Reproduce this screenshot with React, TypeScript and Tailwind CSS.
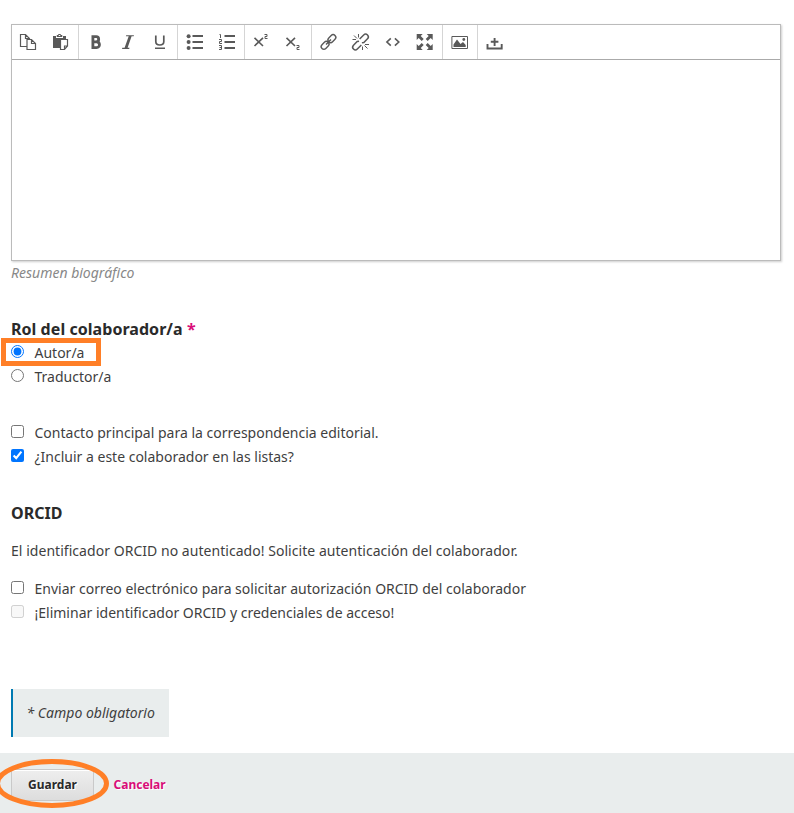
import type { ReactNode } from "react";

function Icon({ children }: { children: ReactNode }) {
  return (
    <svg width="18" height="18" viewBox="0 0 18 18" fill="none" stroke="#595959" strokeWidth="1" className="shrink-0 overflow-visible">
      {children}
    </svg>
  );
}

const solid = { fill: "#595959", stroke: "none" };

const icons: Record<string, ReactNode> = {
  Copiar: (
    <Icon>
      <path strokeWidth="1.200" d="M6.500 13.500H0.500V1.500H5.500L9.500 5.500V6M5.500 1.500V5.500H9.500M7 6.500H11.500L15.500 10.500V16.500H7ZM11.500 6.500V10.500H15.500" />
    </Icon>
  ),
  Pegar: (
    <Icon>
      <path {...solid} d="M1 3H4V5H11V3H14V6H8V15H1Z" />
      <path d="M5 3.500V2.500H6.500V1.500H8.500V2.500H10V3.500H5" />
      <path strokeWidth="1.200" d="M8.500 6.500H15.500V13L12.500 16.500H8.500ZM15.500 13H12.500V16.500" />
    </Icon>
  ),
  Negrita: (
    <Icon>
      <path strokeWidth="2.800" d="M5.900 3.700H9.200C12.500 3.700 12.500 8.800 9.200 8.800H5.900ZM5.900 8.800H9.600C13.400 8.800 13.400 14.600 9.600 14.600H5.900Z" />
    </Icon>
  ),
  Cursiva: (
    <Icon>
      <path {...solid} d="M7.200 2.200H15L14.700 3.300H12.600L8.600 14.800H10.500L10.200 16H3L3.300 14.800H5.600L9.700 3.300H6.900Z" />
    </Icon>
  ),
  Subrayado: (
    <Icon>
      <path strokeWidth="1.700" d="M4.800 2.500V8.500Q4.800 12 8.800 12Q12.800 12 12.800 8.500V2.500" />
      <path {...solid} d="M4 14.500H14V16H4Z" />
    </Icon>
  ),
  Lista: (
    <Icon>
      <g {...solid}>
        <circle cx="2.600" cy="3.200" r="2" />
        <circle cx="2.600" cy="9" r="2" />
        <circle cx="2.600" cy="15" r="2" />
        <path d="M6.500 2H17V4H6.500ZM6.500 8H17V10H6.500ZM6.500 14H17V16H6.500Z" />
      </g>
    </Icon>
  ),
  "Lista numerada": (
    <Icon>
      <path {...solid} d="M6.500 2H17V4H6.500ZM6.500 8H17V10H6.500ZM6.500 14H17V16H6.500Z" />
      <path d="M1.500 1.500H2.500V5M1 6.500H3.500V8.500H1.500V10.500H4M1 12.500H3.500V16.500H1M1.500 14.500H3.500" />
    </Icon>
  ),
  Superíndice: (
    <Icon>
      <path strokeWidth="1.600" d="M1.500 4.800L10 13M10 4.800L1.500 13" />
      <path d="M11.500 1.500H14V3.500H12V5.500H14.500" />
    </Icon>
  ),
  Subíndice: (
    <Icon>
      <path strokeWidth="1.600" d="M1.500 4.800L10 13M10 4.800L1.500 13" />
      <path d="M11.500 12.500H14V14.500H12V16.500H14.500" />
    </Icon>
  ),
  Enlace: (
    <Icon>
      <g transform="translate(-0.500 0) rotate(-45 9 9)" strokeWidth="1.400">
        <rect x="-0.200" y="6.300" width="8.800" height="5.400" rx="2.700" />
        <rect x="9.400" y="6.300" width="8.800" height="5.400" rx="2.700" />
        <path strokeWidth="1.500" d="M5.500 9H12.500" />
      </g>
    </Icon>
  ),
  "Quitar enlace": (
    <Icon>
      <g transform="translate(-0.500 0) rotate(-45 9 9)" strokeWidth="1.500">
        <path d="M7.500 11.700H1.800A2.700 2.700 0 0 1 1.800 6.300H7L8.500 7.500M10.500 6.300H16.200A2.700 2.700 0 0 1 16.200 11.700H11L9.500 10.500" />
      </g>
      <path strokeWidth="1" d="M0.500 6.500H4M2 2.500L5 5.500M6.500 1V4.500M13 11.500H17M12.500 12.500L15.500 15.500M10.500 13.500V17" />
    </Icon>
  ),
  Código: (
    <Icon>
      <path strokeWidth="1.600" d="M6.800 5.300L2.900 9L6.800 12.700M10.900 5.300L14.800 9L10.900 12.700" />
    </Icon>
  ),
  "Pantalla completa": (
    <Icon>
      <g transform="translate(-0.300 0)">
        <path {...solid} d="M1 1H7L5 3L8 6L6 8L3 5L1 7ZM17 1V7L15 5L12 8L10 6L13 3L11 1ZM1 17V11L3 13L6 10L8 12L5 15L7 17ZM17 17H11L13 15L10 12L12 10L15 13L17 11Z" />
      </g>
    </Icon>
  ),
  Imagen: (
    <Icon>
      <path d="M0.900 3.500H16.500V15.500H0.900Z" />
      <path {...solid} d="M2.500 14V11.500L6 6.500L9.500 11L12 9L14.700 12V14Z" />
      <circle {...solid} cx="12.800" cy="6.500" r="1.400" />
    </Icon>
  ),
  Subir: (
    <Icon>
      <path strokeWidth="1.900" d="M1.500 11V15.500H15.700V11M8.600 5V13M4.800 8.800H12.400" />
    </Icon>
  ),
};

const groups = [
  ["Copiar", "Pegar"],
  ["Negrita", "Cursiva", "Subrayado"],
  ["Lista", "Lista numerada"],
  ["Superíndice", "Subíndice"],
  ["Enlace", "Quitar enlace", "Código", "Pantalla completa"],
  ["Imagen"],
  ["Subir"],
];

function Choice({ label, type = "checkbox", checked = false, disabled = false }: { label: string; type?: string; checked?: boolean; disabled?: boolean }) {
  return (
    <label className="flex h-6 items-start">
      <input type={type} name={type === "radio" ? "rol" : undefined} defaultChecked={checked} disabled={disabled} className="mt-[5px] size-[13px] shrink-0" />
      <span className="ml-[10.5px] pt-px">{label}</span>
    </label>
  );
}

export default function App() {
  return (
    <div className="h-[813px] w-full overflow-hidden bg-white pt-6 font-['Noto_Sans',sans-serif] text-[14px] leading-6 text-[#3f3f3f]">
      <div className="h-[729px] pl-[11px]">
        <div className="h-[237px] w-[770px] border border-[#bbb] shadow-[1px_1px_2px_rgba(0,0,0,0.2)]">
          <div className="flex h-[35px] border-b border-[#aaa]">
            {groups.map((group, i) => (
              <div key={group[0]} className={i < groups.length - 1 ? "flex border-r border-[#d5d5d5] px-px" : "flex px-px"}>
                {group.map((name) => (
                  <button key={name} aria-label={name} className="flex w-8 items-center justify-center">
                    {icons[name]}
                  </button>
                ))}
              </div>
            ))}
          </div>
        </div>
        <p className="text-[#888] italic">Resumen biográfico</p>

        <h2 className="mt-8 h-[23px] text-[16px] font-bold tracking-[0.05px] text-[#2a2a2a]">
          Rol del colaborador/a <span className="text-[#d90d78]">*</span>
        </h2>
        <div className="relative">
          <Choice type="radio" label="Autor/a" checked />
          <div className="pointer-events-none absolute top-[-2px] left-[-10px] h-7 w-[100px] border-[5px] border-[#ff7f27]" />
        </div>
        <Choice type="radio" label="Traductor/a" />

        <div className="mt-8">
          <Choice label="Contacto principal para la correspondencia editorial." />
          <Choice label="¿Incluir a este colaborador en las listas?" checked />
        </div>

        <h2 className="mt-[33px] text-[16px] font-bold text-[#2a2a2a]">ORCID</h2>
        <p className="mt-[14px] tracking-[0.04px]">El identificador ORCID no autenticado! Solicite autenticación del colaborador.</p>
        <div className="mt-[13px]">
          <Choice label="Enviar correo electrónico para solicitar autorización ORCID del colaborador" />
          <Choice label="¡Eliminar identificador ORCID y credenciales de acceso!" disabled />
        </div>

        <p className="mt-[65px] flex h-12 w-[158px] items-center border-l-2 border-[#007ab2] bg-[#e9eded] pl-[13.5px] italic">* Campo obligatorio</p>
      </div>
      <footer className="relative flex h-[60px] items-start bg-[#e9eded] pt-4 pl-[11px] text-[12px] font-bold">
        <button className="h-8 w-[83px] rounded-[3px] border border-[#c9c9c9] bg-linear-to-b from-[#eee] to-[#ddd] text-[#2a2a2a] shadow-[inset_0_1px_0_#fff] text-shadow-[1px_1px_0_#fff]">Guardar</button>
        <a className="ml-[19.5px] leading-8 text-[#d90d78] text-shadow-[1px_1px_0_#fff]">Cancelar</a>
        <svg className="absolute top-[5px] left-[-6px]" width="117" height="52" fill="none">
          <ellipse cx="58" cy="25.500" rx="54.500" ry="22" stroke="#ff7f27" strokeWidth="5" />
        </svg>
      </footer>
    </div>
  );
}
